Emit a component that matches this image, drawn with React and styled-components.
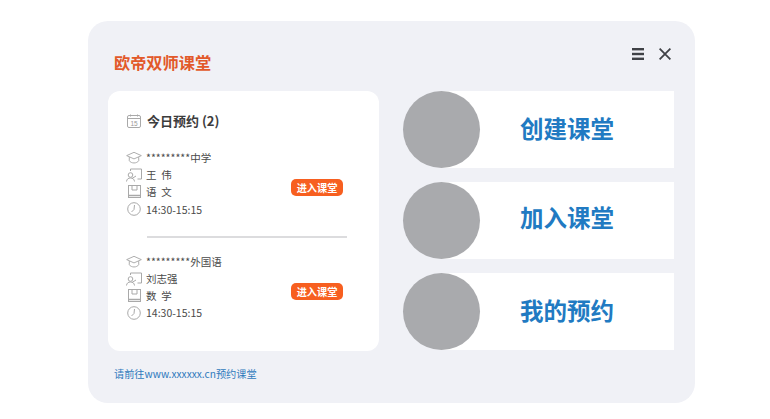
import React from "react";
import styled, { createGlobalStyle } from "styled-components";

const Global = createGlobalStyle`
  html, body { margin: 0; padding: 0; background: #fff; }
  body { font-family: "Noto Sans CJK SC", "Noto Sans", sans-serif; }
`;
const Panel = styled.div`
  box-sizing: border-box;
  width: 607px;
  height: 382px;
  margin: 21px 0 0 88px;
  padding: 0 21px 0 20px;
  background: #f0f1f6;
  border-radius: 20px;
  display: flex;
  flex-direction: column;
`;
const Header = styled.div`
  height: 70px;
  display: flex;
  align-items: flex-start;
  justify-content: space-between;
`;
const Title = styled.h1`
  margin: 29px 0 0 6px;
  font-size: 16.2px;
  line-height: 24px;
  font-weight: 700;
  color: #e2592a;
`;
const Tools = styled.div`
  display: flex;
  align-items: center;
  gap: 15px;
  margin: 27px 0 0 0;
  padding-right: 3px;
`;
const Body = styled.div`
  display: flex;
  gap: 24px;
  height: 260px;
`;
const Card = styled.section`
  box-sizing: border-box;
  width: 271px;
  height: 260px;
  background: #fff;
  border-radius: 12px;
  padding: 19px 32px 0 18px;
`;
const CardHead = styled.div`
  display: flex;
  align-items: center;
  gap: 5px;
  height: 22px;
`;
const CardTitle = styled.h2`
  margin: 0;
  font-size: 13px;
  line-height: 22px;
  font-weight: 700;
  color: #3c3c3c;
`;
const Booking = styled.div`
  display: flex;
  align-items: center;
  justify-content: space-between;
  margin-top: ${p => p.$top}px;
`;
const Lines = styled.div`
  display: flex;
  flex-direction: column;
`;
const Line = styled.div`
  display: flex;
  align-items: center;
  gap: 4px;
  height: 17.2px;
  font-size: 10.5px;
  color: #4a4a4a;
  white-space: pre;
`;
const IconSlot = styled.span`
  width: 16px;
  display: flex;
  justify-content: center;
`;
const Enter = styled.button`
  border: 0;
  width: 52px;
  height: 17px;
  padding: 0;
  margin: 8px 4px 0 0;
  border-radius: 5px;
  background: #f75f20;
  color: #fff;
  font: 700 10.2px/17px "Noto Sans CJK SC", sans-serif;
`;
const Divider = styled.hr`
  border: 0;
  height: 2px;
  width: 200px;
  margin: 18.5px 0 0 21px;
  background: #dcdcde;
`;
const Actions = styled.div`
  width: 271px;
  display: flex;
  flex-direction: column;
  gap: 13.75px;
`;
const Action = styled.div`
  position: relative;
  box-sizing: border-box;
  height: 77.25px;
  margin-left: 38px;
  padding: 0 0 ${p => p.$lift}px 19px;
  background: #fff;
  display: flex;
  align-items: center;
  justify-content: center;
`;
const Circle = styled.span`
  position: absolute;
  left: -38px;
  top: 0;
  width: 77px;
  height: 77px;
  border-radius: 50%;
  background: #a9aaad;
`;
const ActionLabel = styled.span`
  font-size: 23.5px;
  font-weight: 700;
  color: #217ac2;
`;
const Footer = styled.a`
  margin: 14px 0 0 6px;
  font-size: 10.2px;
  line-height: 17px;
  color: #2f7abd;
`;

const Stroke = { fill: "none", stroke: "#a9a9a9", strokeWidth: 1 };
const Cal = () => <svg width="14" height="14" viewBox="0 0 14 14" {...Stroke}><rect x=".5" y="1.5" width="13" height="12" rx="1.5"/><path d="M.5 4.5h13M3.5.5v2M10.5.5v2"/><text x="7" y="11.5" fontSize="6.5" textAnchor="middle" fill="#999" stroke="none" fontFamily="Liberation Sans">15</text></svg>;
const Hat = () => <svg width="17" height="13" viewBox="0 0 17 13" {...Stroke}><path d="M.7 4.5 8.5 1l7.8 3.5-7.8 3.500zM3.500 6v4c1 1.500 3 2.300 5 2.300s4-.8 5-2.300V6"/></svg>;
const Teacher = () => <svg width="16" height="14" viewBox="0 0 16 14" {...Stroke}><path d="M4.500 3V1h11v10h-4M6 10.500 10 8"/><circle cx="4.500" cy="7" r="2.300"/><path d="M.5 13.500c.3-2.500 1.800-3.500 4-3.500s3.700 1 4 3.500"/></svg>;
const Book = () => <svg width="13" height="13" viewBox="0 0 13 13" stroke="#a9a9a9" fill="none"><rect x=".5" y=".5" width="12" height="12"/><path d="M.5 10.500h12" strokeWidth="1.500"/><path d="M4 .5v4.500h5v-4.500"/></svg>;
const Clock = () => <svg width="14" height="14" viewBox="0 0 14 14" {...Stroke}><circle cx="7" cy="7" r="6.300"/><path d="M7.500 3 7 7.500 4.500 10"/></svg>;
const Menu = () => <svg width="12" height="12" viewBox="0 0 12 12" fill="#3f4146"><rect width="12" height="2.400"/><rect y="4.800" width="12" height="2.400"/><rect y="9.600" width="12" height="2.400"/></svg>;
const Close = () => <svg width="12" height="12" viewBox="0 0 12 12" stroke="#3f4146" strokeWidth="1.800" fill="none"><path d="M.6.6l10.800 10.800M11.400.6.600 11.400"/></svg>;

const Row = ({ icon, children }) => <Line><IconSlot>{icon}</IconSlot>{children}</Line>;

const BookingItem = ({ top, school, teacher, subject }) => (
  <Booking $top={top}>
    <Lines>
      <Row icon={<Hat />}>{school}</Row>
      <Row icon={<Teacher />}>{teacher}</Row>
      <Row icon={<Book />}>{subject}</Row>
      <Row icon={<Clock />}>14:30-15:15</Row>
    </Lines>
    <Enter>进入课堂</Enter>
  </Booking>
);

export default function App() {
  return (
    <>
      <Global />
      <Panel>
        <Header>
          <Title>欧帝双师课堂</Title>
          <Tools><Menu /><Close /></Tools>
        </Header>
        <Body>
          <Card>
            <CardHead><IconSlot><Cal /></IconSlot><CardTitle>今日预约 (2)</CardTitle></CardHead>
            <BookingItem top={17} school="*********中学" teacher="王  伟" subject="语  文" />
            <Divider />
            <BookingItem top={14.5} school="*********外国语" teacher="刘志强" subject="数  学" />
          </Card>
          <Actions>
            <Action $lift={4}><Circle /><ActionLabel>创建课堂</ActionLabel></Action>
            <Action $lift={7}><Circle /><ActionLabel>加入课堂</ActionLabel></Action>
            <Action $lift={4}><Circle /><ActionLabel>我的预约</ActionLabel></Action>
          </Actions>
        </Body>
        <Footer>请前往www.xxxxxx.cn预约课堂</Footer>
      </Panel>
    </>
  );
}
